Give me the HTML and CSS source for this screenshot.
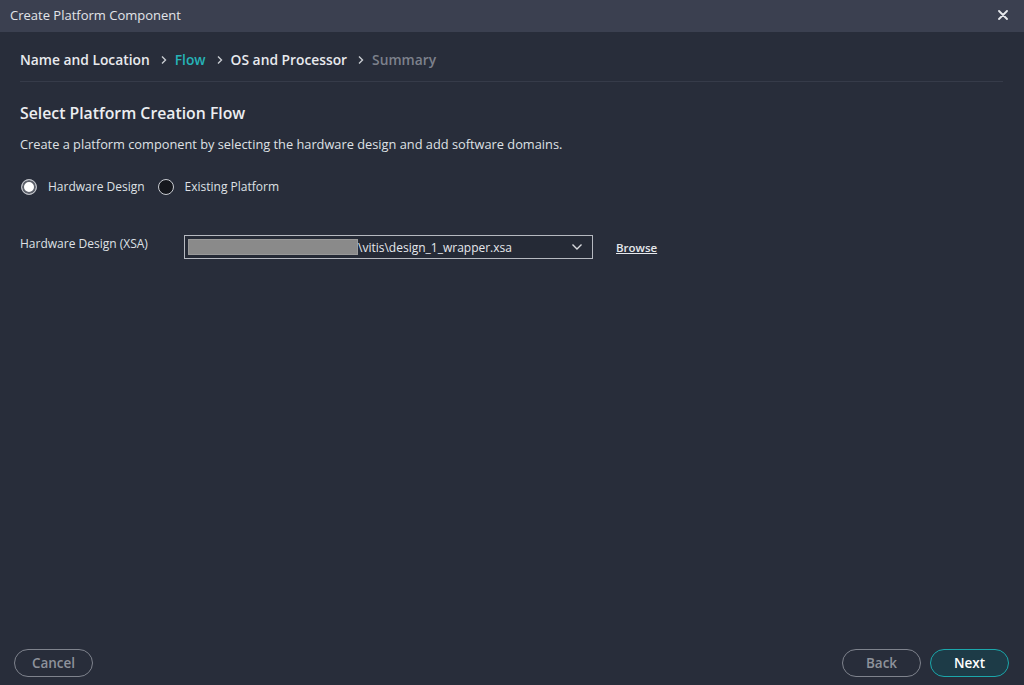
FILE: index.html
```html
<!DOCTYPE html>
<html>
<head>
<meta charset="utf-8">
<link rel="stylesheet" href="styles.css">
</head>
<body>
<div class="dialog">
  <header class="titlebar">
    <span class="title">Create Platform Component</span>
    <span class="close">
      <svg width="10" height="10" viewBox="0 0 10 10"><path d="M1 1 L9 9 M9 1 L1 9" stroke="#e6e8ec" stroke-width="1.8" stroke-linecap="round"/></svg>
    </span>
  </header>
  <main class="content">
    <nav class="crumbs">
      <span class="crumb done">Name and Location</span>
      <svg class="chev" width="8" height="10" viewBox="0 0 8 10"><path d="M2 1.5 L5.5 5 L2 8.5" fill="none" stroke="#c9ccd2" stroke-width="1.4"/></svg>
      <span class="crumb active">Flow</span>
      <svg class="chev" width="8" height="10" viewBox="0 0 8 10"><path d="M2 1.5 L5.5 5 L2 8.5" fill="none" stroke="#c9ccd2" stroke-width="1.4"/></svg>
      <span class="crumb done">OS and Processor</span>
      <svg class="chev" width="8" height="10" viewBox="0 0 8 10"><path d="M2 1.5 L5.5 5 L2 8.5" fill="none" stroke="#c9ccd2" stroke-width="1.4"/></svg>
      <span class="crumb todo">Summary</span>
    </nav>
    <h1 class="heading">Select Platform Creation Flow</h1>
    <p class="desc">Create a platform component by selecting the hardware design and add software domains.</p>
    <div class="radios">
      <label class="radio"><span class="dot on"></span>Hardware Design</label>
      <label class="radio"><span class="dot"></span>Existing Platform</label>
    </div>
    <div class="field">
      <span class="field-label">Hardware Design (XSA)</span>
      <div class="select">
        <span class="redact"></span>
        <span class="path">\vitis\design_1_wrapper.xsa</span>
        <svg class="caret" width="12" height="8" viewBox="0 0 12 8"><path d="M1.5 1.5 L6 6 L10.5 1.5" fill="none" stroke="#d8dade" stroke-width="1.4"/></svg>
      </div>
      <a class="browse">Browse</a>
    </div>
  </main>
  <footer class="footer">
    <button class="btn ghost">Cancel</button>
    <div class="right">
      <button class="btn ghost">Back</button>
      <button class="btn primary">Next</button>
    </div>
  </footer>
</div>
</body>
</html>
```
FILE: styles.css
```css
html, body {
  margin: 0;
  padding: 0;
}
body {
  width: 1024px;
  height: 685px;
  background: #282d3a;
  font-family: "Open Sans", "Noto Sans", sans-serif;
  color: #e4e6ea;
  overflow: hidden;
}
.dialog {
  display: flex;
  flex-direction: column;
  height: 685px;
}
.titlebar {
  height: 32px;
  background: #3b4050;
  display: flex;
  align-items: center;
  justify-content: space-between;
  padding: 0 16px 2px 10px;
  box-sizing: border-box;
}
.title {
  font-size: 13px;
  color: #e2e4e8;
}
.close {
  display: flex;
  align-items: center;
}
.content {
  flex: 1;
  padding: 0 21px 0 20px;
}
.crumbs {
  display: flex;
  align-items: center;
  padding-top: 6px;
  border-bottom: 1px solid #363b49;
  box-sizing: border-box;
  height: 50px;
}
.crumb {
  font-size: 13.8px;
  font-weight: 600;
}
.chev {
  margin: 0 7px 0 10px;
}
.crumb.done { color: #e8eaee; }
.crumb.active { color: #26b3b7; }
.crumb.todo { color: #7d818c; }
.heading {
  margin: 20px 0 0;
  font-size: 15.8px;
  font-weight: 600;
  color: #eceef1;
  line-height: 22px;
}
.desc {
  margin: 11px 0 0;
  font-size: 12.8px;
  line-height: 18px;
  color: #dfe1e5;
}
.radios {
  display: flex;
  gap: 12px;
  margin-top: 25px;
}
.radio {
  display: flex;
  align-items: center;
  font-size: 12px;
  color: #dfe1e5;
  line-height: 18px;
}
.dot {
  width: 16px;
  height: 16px;
  box-sizing: border-box;
  border-radius: 50%;
  border: 1.5px solid #c9ccd2;
  background: #15171d;
  margin-right: 11px;
  margin-left: 1px;
}
.dot.on {
  background: #ffffff;
  box-shadow: inset 0 0 0 2px #5c606a;
  border-color: #b8bbc2;
}
.field {
  display: flex;
  align-items: center;
  margin-top: 39px;
}
.field-label {
  width: 164px;
  font-size: 12px;
  color: #dfe1e5;
  margin-top: -7px;
}
.select {
  width: 409px;
  height: 24px;
  box-sizing: border-box;
  border: 1px solid #b6b9c0;
  background: #252a36;
  display: flex;
  align-items: center;
  padding: 0 9px 0 3px;
}
.redact {
  width: 170px;
  height: 16px;
  box-sizing: border-box;
  background: #8a8a8a;
  border: 1px solid #9a9a9a;
}
.path {
  flex: 1;
  font-size: 12px;
  color: #e6e8ec;
}
.caret {
  display: block;
}
.browse {
  margin-left: 23px;
  font-size: 11.5px;
  font-weight: 600;
  color: #e6e8ec;
  text-decoration: underline;
  margin-top: 0;
}
.footer {
  display: flex;
  justify-content: space-between;
  align-items: center;
  padding: 0 15px 8px 14px;
}
.right {
  display: flex;
  gap: 9px;
}
.btn {
  width: 79px;
  height: 28px;
  border-radius: 14px;
  font-family: "Open Sans", "Noto Sans", sans-serif;
  font-size: 13.5px;
  font-weight: 600;
  box-sizing: border-box;
  padding: 0;
}
.btn.ghost {
  background: transparent;
  border: 1px solid #7f838d;
  color: #8e929b;
}
.btn.primary {
  background: #1d3b47;
  border: 1.5px solid #1ba7ab;
  color: #ffffff;
}
```
